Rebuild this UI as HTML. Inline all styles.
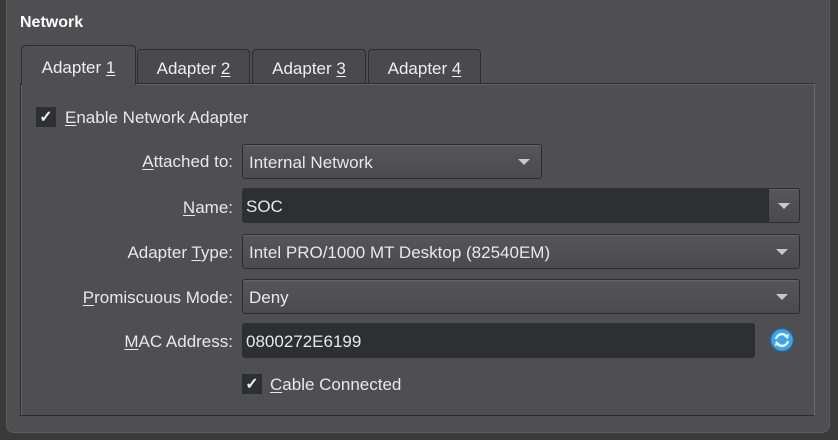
<!DOCTYPE html>
<html><head><style>
*{box-sizing:border-box;margin:0;padding:0}
body{width:838px;height:440px;background:#3a3a3b;font-family:"Liberation Sans",sans-serif;color:#e8e8e8;font-size:17px;position:relative;overflow:hidden}
.outer{position:absolute;left:6px;top:-10px;width:824px;height:443px;background:#4f4f51;border:1px solid #5c5c5e;border-radius:8px}
.abs{position:absolute}
.title{left:20px;top:14px;font-weight:bold;font-size:16px;color:#fff}
.tab{position:absolute;background:#4a4a4c;border:1px solid #2e2e30;border-bottom:none;border-radius:4px 4px 0 0;text-align:center;line-height:37px;color:#eee}
.tab.sel{background:#4f4f51;line-height:44px;z-index:2;border-color:#2e2e30}
.pane{left:20px;top:83px;width:795px;height:333px;border:1px solid #2e2e30;border-right-color:#6a6a6c;border-bottom-color:#2a2a2c;box-shadow:inset 1px 1px 0 #626264}
u{text-decoration:underline;text-underline-offset:2px}
.lbl{position:absolute;right:605px;text-align:right;white-space:nowrap}
.combo{position:absolute;left:242px;height:35px;border:1px solid #2c2c2e;border-radius:3px;background:linear-gradient(#565658,#4b4b4d);box-shadow:inset 0 1px 0 #646466;padding-left:6px;line-height:35px}
.dark{position:absolute;left:242px;height:35px;background:#2e2f31;border-radius:3px;padding-left:4px;line-height:37px}
.arr{position:absolute;right:11px;top:14px;width:0;height:0;border-left:6px solid transparent;border-right:6px solid transparent;border-top:6px solid #c8c8c8}
.cb{position:absolute;width:20px;height:20px;background:#2e2f31;color:#f0f0f0;font-size:16px;text-align:center;line-height:21px;font-weight:bold}
</style></head><body>
<div class="outer"></div>
<div class="abs title">Network</div>
<div class="tab sel" style="left:21px;top:45px;width:115px;height:40px">Adapter <u>1</u></div>
<div class="tab" style="left:137px;top:49px;width:113px;height:34px">Adapter <u>2</u></div>
<div class="tab" style="left:252px;top:49px;width:114px;height:34px">Adapter <u>3</u></div>
<div class="tab" style="left:368px;top:49px;width:113px;height:34px">Adapter <u>4</u></div>
<div class="abs pane"></div>

<div class="cb" style="left:36px;top:107px">✓</div>
<div class="abs" style="left:65px;top:108px"><u>E</u>nable Network Adapter</div>

<div class="lbl" style="top:152px"><u>A</u>ttached to:</div>
<div class="combo" style="top:144px;width:300px">Internal Network<div class="arr"></div></div>

<div class="lbl" style="top:198px"><u>N</u>ame:</div>
<div class="dark" style="top:188px;width:558px">SOC</div>
<div class="combo" style="top:188px;left:768px;width:32px;padding:0;border-radius:0 3px 3px 0"><div class="arr" style="right:9px"></div></div>

<div class="lbl" style="top:243px">Adapter <u>T</u>ype:</div>
<div class="combo" style="top:234px;width:558px">Intel PRO/1000 MT Desktop (82540EM)<div class="arr"></div></div>

<div class="lbl" style="top:288px"><u>P</u>romiscuous Mode:</div>
<div class="combo" style="top:279px;width:558px">Deny<div class="arr"></div></div>

<div class="lbl" style="top:332px"><u>M</u>AC Address:</div>
<div class="dark" style="top:323px;width:513px">0800272E6199</div>
<svg class="abs" style="left:770px;top:328px" width="24" height="24" viewBox="0 0 24 24">
<circle cx="12" cy="12" r="11" fill="#3ba6f0" stroke="#1f7fc8" stroke-width="1"/>
<path d="M6 11 A6 6 0 0 1 17 9" stroke="#fff" stroke-width="2.2" fill="none"/>
<path d="M18 13 A6 6 0 0 1 7 15" stroke="#fff" stroke-width="2.2" fill="none"/>
<path d="M14 8 L19 6 L18 11 Z" fill="#fff"/><path d="M10 16 L5 18 L6 13 Z" fill="#fff"/>
</svg>

<div class="cb" style="left:242px;top:374px">✓</div>
<div class="abs" style="left:270px;top:375px"><u>C</u>able Connected</div>
</body></html>
